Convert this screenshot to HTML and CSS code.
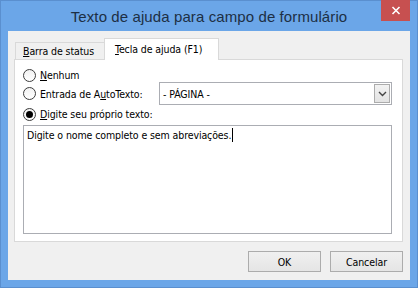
FILE: index.html
```html
<!DOCTYPE html>
<html lang="pt">
<head>
<meta charset="utf-8">
<title>Texto de ajuda para campo de formulário</title>
<link rel="stylesheet" href="styles.css">
</head>
<body>
<div class="window">
  <div class="titlebar">
    <div class="title">Texto de ajuda para campo de formulário</div>
    <div class="close"><svg width="10" height="9" viewBox="0 0 10 9"><path d="M1.5 1 L8.5 8 M8.5 1 L1.5 8" stroke="#fff" stroke-width="1.6" fill="none"/></svg></div>
  </div>
  <div class="client">
    <div class="tabs">
      <div class="tab"><u>B</u>arra de status</div>
      <div class="tab active"><u>T</u>ecla de ajuda (F1)</div>
    </div>
    <div class="panel">
      <div class="row">
        <span class="radio"></span><span class="label"><u>N</u>enhum</span>
      </div>
      <div class="row row-select">
        <span class="radio"></span><span class="label label-wide">Entrada de A<u>u</u>toTexto:</span>
        <div class="select">
          <span class="select-text">- PÁGINA -</span>
          <span class="select-btn"><svg width="9" height="6" viewBox="0 0 9 6"><path d="M1 1 L4.5 4.5 L8 1" stroke="#444" stroke-width="1.4" fill="none"/></svg></span>
        </div>
      </div>
      <div class="row row-own">
        <span class="radio checked"></span><span class="label"><u>D</u>igite seu próprio texto:</span>
      </div>
      <div class="textarea">Digite o nome completo e sem abreviações.<span class="caret"></span></div>
    </div>
    <div class="buttons">
      <div class="btn">OK</div>
      <div class="btn">Cancelar</div>
    </div>
  </div>
</div>
</body>
</html>
```

FILE: styles.css
```css
* { box-sizing: border-box; }
html, body { margin: 0; padding: 0; }
body {
  width: 418px;
  height: 288px;
  overflow: hidden;
  font-family: "DejaVu Sans Condensed", "DejaVu Sans", sans-serif;
  font-stretch: condensed;
  font-size: 10.5px;
  letter-spacing: -0.1px;
  color: #000;
}
.window {
  width: 418px;
  height: 288px;
  background: #6ba6e8;
  border: 1px solid #5a8fcf;
  padding: 0 7px 7px 7px;
  display: flex;
  flex-direction: column;
}
.titlebar {
  height: 30px;
  display: flex;
  align-items: flex-start;
  justify-content: center;
  position: relative;
}
.title {
  font-family: "Liberation Sans", sans-serif;
  font-stretch: normal;
  font-size: 15px;
  color: #1d2f44;
  margin-top: 7px;
  letter-spacing: 0.1px;
}
.close {
  position: absolute;
  right: 0;
  top: -1px;
  width: 29px;
  height: 21px;
  background: #c75050;
  display: flex;
  align-items: center;
  justify-content: center;
}
.client {
  flex: 1;
  background: #f0f0f0;
  padding: 7px 7px 0 6px;
  display: flex;
  flex-direction: column;
}
.tabs {
  display: flex;
  align-items: flex-end;
  height: 21px;
  padding-left: 1px;
  position: relative;
  z-index: 1;
}
.tab {
  width: 90px;
  height: 17px;
  padding: 0 0 0 7px;
  border: 1px solid #d9d9d9;
  border-bottom: none;
  background: #f0f0f0;
  line-height: 16px;
  white-space: nowrap;
}
.tab.active {
  width: 115px;
  height: 22px;
  margin-bottom: -1px;
  background: #fff;
  border-color: #d9d9d9;
  padding: 2px 0 0 10px;
  margin-left: -1px;
}
.panel {
  height: 183px;
  background: #fff;
  border: 1px solid #d9d9d9;
  padding: 8px 10px 0 8px;
  display: flex;
  flex-direction: column;
}
.row {
  display: flex;
  align-items: center;
  height: 14px;
}
.row-select {
  height: 23px;
}
.row-own {
  margin-top: 2px;
}
.radio {
  width: 13px;
  height: 13px;
  border-radius: 50%;
  border: 1px solid #3c3c3c;
  background: linear-gradient(#f2f2f2, #fff);
  flex: none;
  display: flex;
  align-items: center;
  justify-content: center;
}
.radio.checked::after {
  content: "";
  width: 7px;
  height: 7px;
  border-radius: 50%;
  background: #000;
}
.label { margin-left: 4px; white-space: nowrap; }
.label-wide { width: 119px; }
.select {
  width: 233px;
  height: 23px;
  border: 1px solid #abadb3;
  background: #fff;
  display: flex;
  align-items: center;
  justify-content: space-between;
  padding: 0 1px 0 3px;
}
.select-btn {
  width: 16px;
  height: 19px;
  border: 1px solid #acacac;
  background: linear-gradient(#f2f2f2, #e3e3e3);
  display: flex;
  align-items: center;
  justify-content: center;
}
.textarea {
  margin-top: 4px;
  width: 369px;
  height: 109px;
  border: 1px solid #abadb3;
  padding: 2px 3px;
  line-height: 14px;
}
.caret {
  display: inline-block;
  width: 1px;
  height: 14px;
  background: #000;
  vertical-align: top;
  margin-left: 1px;
}
.buttons {
  display: flex;
  justify-content: flex-end;
  gap: 9px;
  padding-top: 9px;
}
.btn {
  width: 73px;
  height: 21px;
  border: 1px solid #acacac;
  background: linear-gradient(#f0f0f0, #e5e5e5);
  display: flex;
  align-items: center;
  justify-content: center;
}
```
